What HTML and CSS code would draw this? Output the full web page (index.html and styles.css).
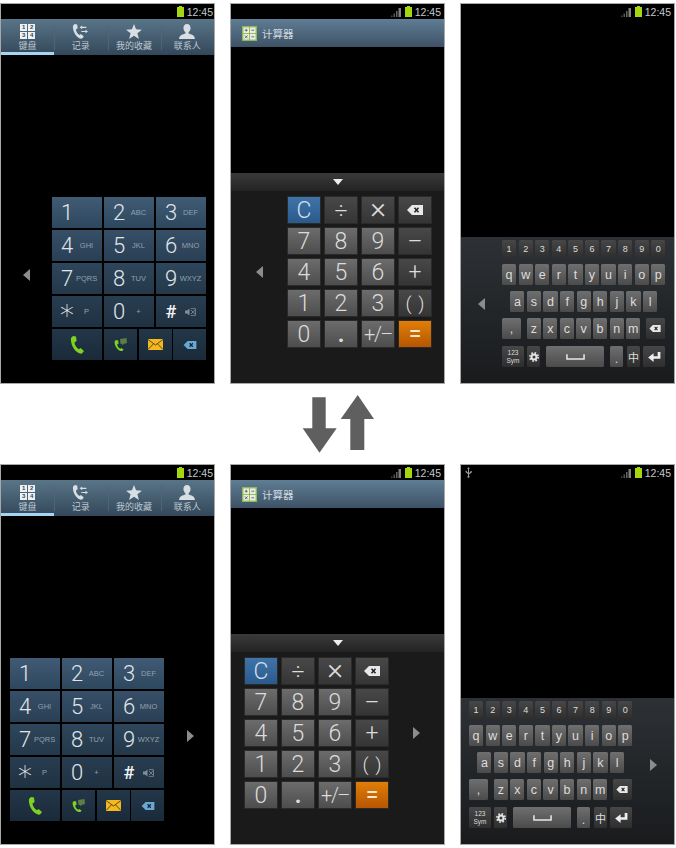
FILE: index.html
```html
<!DOCTYPE html>
<html>
<head>
  <meta charset="UTF-8">
  <title>单手操作</title>
  <link rel="stylesheet" href="styles.css">
</head>
<body>
  <svg class="sprite" xmlns="http://www.w3.org/2000/svg">
    <symbol id="handset" viewBox="0 0 14 18"><path d="M3 0 L6 .6 L6.6 5 L4.5 6.5 C4.6 9 6.500 12 9 13.200 L10.500 12 L14 15 L12 17.500 C7 18.800 0 10 1 2 Z"/></symbol>
    <symbol id="ipcall" viewBox="0 0 13 13"><path fill="#7ed321" d="M2 2 L4.200 2.400 L4.600 5.600 L3.200 6.600 C3.300 8.200 4.600 10 6.200 10.800 L7.200 10 L9.600 11.600 L8.400 13 C4.800 13.800 0 8 .7 3.200 Z"/><path fill="#5d7d45" d="M6 1 L12.500 0 L13 5 L9.500 6 L8.500 7.500 L8 5.800 L6.500 6 Z"/></symbol>
    <symbol id="mail" viewBox="0 0 15 11"><rect width="15" height="11" fill="#f5b91e"/><path d="M0 .5 L7.500 6 L15 .5 M0 10.500 L5.500 4.800 M15 10.500 L9.500 4.800" fill="none" stroke="#4a3c14" stroke-width=".9"/></symbol>
    <symbol id="mute" viewBox="0 0 11 8"><path d="M0 2.500 H2 L4.500 .5 V7.500 L2 5.500 H0 Z"/><path d="M6 2 L10 6 M10 2 L6 6 M5.800 .6 H10.500 V7.400 H5.800" fill="none" stroke="currentColor" stroke-width=".8"/></symbol>
    <symbol id="backspace" viewBox="0 0 16 10"><path d="M5 0 H16 V10 H5 L0 5 Z"/><path d="M7.500 2.800 L11.500 7.200 M11.500 2.800 L7.500 7.200" class="cut"/></symbol>
    <symbol id="battery" viewBox="0 0 7 11"><path d="M2 0 H5 V1 H7 V11 H0 V1 H2 Z"/></symbol>
    <symbol id="signal" viewBox="0 0 10 10"><path d="M0 8.500 H1.500 V10 H0 Z" fill="#444"/><path d="M2.500 6.500 H4 V10 H2.500 Z" fill="#555"/><path d="M5 4 H6.500 V10 H5 Z" fill="#666"/><path d="M7.500 1 H10 V10 H7.500 Z" fill="#808080"/></symbol>
    <symbol id="left" viewBox="0 0 7 12"><path d="M7 0 V12 L0 6 Z"/></symbol>
    <symbol id="right" viewBox="0 0 7 12"><path d="M0 0 V12 L7 6 Z"/></symbol>
    <symbol id="star" viewBox="0 0 20 19"><path d="M10 0 L12.600 6.600 L20 7.200 L14.300 11.800 L16.200 19 L10 15 L3.800 19 L5.700 11.800 L0 7.200 L7.400 6.600 Z"/></symbol>
    <symbol id="person" viewBox="0 0 20 19"><path d="M10 0 C13 0 14.500 2.300 14.500 5 C14.500 7.500 13.300 9.500 12 10.500 V12 C15 13 20 14 20 19 H0 C0 14 5 13 8 12 V10.500 C6.700 9.500 5.500 7.500 5.500 5 C5.500 2.300 7 0 10 0 Z"/></symbol>
    <symbol id="calls" viewBox="0 0 20 18"><path d="M3 0 L6 .6 L6.600 5 L4.500 6.500 C4.600 9 6.500 12 9 13.200 L10.500 12 L14 15 L12 17.500 C7 18.800 0 10 1 2 Z"/><path d="M9 4 L12 1.800 V3.300 H17 V4.700 H12 V6.200 Z M19 9 L16 6.800 V8.300 H11 V9.700 H16 V11.200 Z"/></symbol>
    <symbol id="gear" viewBox="0 0 12 12"><circle cx="6" cy="6" r="3" fill="none" stroke="currentColor" stroke-width="2.400"/><circle cx="6" cy="6" r="5" fill="none" stroke="currentColor" stroke-width="2" stroke-dasharray="2 1.930"/></symbol>
    <symbol id="space" viewBox="0 0 20 6"><path d="M1 0 V5 H19 V0" fill="none" stroke="currentColor" stroke-width="1.600"/></symbol>
    <symbol id="enter" viewBox="0 0 14 11"><path d="M10.500 0 H13.500 V7.500 H6 V11 L0 6 L6 1.500 V4.800 H10.500 Z"/></symbol>
    <symbol id="usb" viewBox="0 0 7 11"><path d="M3 2 H2.200 L3.500 0 L4.800 2 H4 V6 L5.500 4.800 V4 H6.800 V5.500 L4 7.600 V9 A1 1 0 1 1 3 9 V7 L.6 5.200 V3.800 H1.800 V4.700 L3 5.600 Z"/></symbol>
    <symbol id="calc" viewBox="0 0 16 16"><rect width="16" height="16" fill="#8fb858"/><rect x="1.500" y="1.500" width="6" height="6" fill="#e8efe0"/><rect x="8.500" y="1.500" width="6" height="6" fill="#e8efe0"/><rect x="1.500" y="8.500" width="6" height="6" fill="#e8efe0"/><rect x="8.500" y="8.500" width="6" height="6" fill="#e8efe0"/><path d="M3 4.500 H6 M4.500 3 V6 M10 4.500 H13 M3 10 L6 13 M6 10 L3 13 M10 11.500 H13" stroke="#556" stroke-width=".9"/></symbol>
  </svg>

  <div class="sheet">
    <!-- first row: panels pushed to the right -->
    <section class="phone">
      <div class="status">
        <svg class="ic-battery"><use href="#battery"/></svg><span class="time">12:45</span>
      </div>
      <nav class="tabs">
        <div class="tab active">
          <div class="tab-pad"><b>1</b><b>2</b><b>3</b><b>4</b></div>
          <span>键盘</span>
        </div>
        <div class="tab"><svg class="tab-ic ic-calls"><use href="#calls"/></svg><span>记录</span></div>
        <div class="tab"><svg class="tab-ic"><use href="#star"/></svg><span>我的收藏</span></div>
        <div class="tab"><svg class="tab-ic"><use href="#person"/></svg><span>联系人</span></div>
      </nav>
      <div class="dial dial-right">
        <div class="side"><svg class="arrow"><use href="#left"/></svg></div>
        <div class="keypad">
          <div class="dkey r1"><i>1</i></div>
          <div class="dkey r1"><i>2</i><em>ABC</em></div>
          <div class="dkey r1"><i>3</i><em>DEF</em></div>
          <div class="dkey r2"><i>4</i><em>GHI</em></div>
          <div class="dkey r2"><i>5</i><em>JKL</em></div>
          <div class="dkey r2"><i>6</i><em>MNO</em></div>
          <div class="dkey r3"><i>7</i><em>PQRS</em></div>
          <div class="dkey r3"><i>8</i><em>TUV</em></div>
          <div class="dkey r3"><i>9</i><em>WXYZ</em></div>
          <div class="dkey r4"><i class="aster">*</i><em>P</em></div>
          <div class="dkey r4"><i>0</i><em>+</em></div>
          <div class="dkey r4"><i class="hash">#</i><svg class="ic-mute"><use href="#mute"/></svg></div>
          <div class="actions">
            <div class="akey wide"><svg class="ic-call"><use href="#handset"/></svg></div>
            <div class="akey"><svg class="ic-ip"><use href="#ipcall"/></svg></div>
            <div class="akey"><svg class="ic-mail"><use href="#mail"/></svg></div>
            <div class="akey"><svg class="ic-del"><use href="#backspace"/></svg></div>
          </div>
        </div>
      </div>
    </section>

    <section class="phone">
      <div class="status tight">
        <svg class="ic-signal"><use href="#signal"/></svg><svg class="ic-battery"><use href="#battery"/></svg><span class="time">12:45</span>
      </div>
      <header class="title"><svg class="ic-calc"><use href="#calc"/></svg><span>计算器</span></header>
      <div class="calc">
        <div class="calc-bar"><div class="drop"></div></div>
        <div class="calc-body calc-right">
          <div class="side"><svg class="arrow"><use href="#left"/></svg></div>
          <div class="calc-keys">
            <div class="ckey clear">C</div><div class="ckey op">÷</div><div class="ckey op times">×</div><div class="ckey op"><svg class="ic-cdel"><use href="#backspace"/></svg></div>
            <div class="ckey">7</div><div class="ckey">8</div><div class="ckey">9</div><div class="ckey op">–</div>
            <div class="ckey">4</div><div class="ckey">5</div><div class="ckey">6</div><div class="ckey op">+</div>
            <div class="ckey">1</div><div class="ckey">2</div><div class="ckey">3</div><div class="ckey op paren">( )</div>
            <div class="ckey">0</div><div class="ckey point">.</div><div class="ckey small">+/–</div><div class="ckey equal">=</div>
          </div>
        </div>
      </div>
    </section>

    <section class="phone">
      <div class="status tight">
        <svg class="ic-signal"><use href="#signal"/></svg><svg class="ic-battery"><use href="#battery"/></svg><span class="time">12:45</span>
      </div>
      <div class="kb kb-right">
        <div class="side"><svg class="arrow"><use href="#left"/></svg></div>
        <div class="kb-keys">
          <div class="kb-row nums"><b>1</b><b>2</b><b>3</b><b>4</b><b>5</b><b>6</b><b>7</b><b>8</b><b>9</b><b>0</b></div>
          <div class="kb-row"><b>q</b><b>w</b><b>e</b><b>r</b><b>t</b><b>y</b><b>u</b><b>i</b><b>o</b><b>p</b></div>
          <div class="kb-row mid"><b>a</b><b>s</b><b>d</b><b>f</b><b>g</b><b>h</b><b>j</b><b>k</b><b>l</b></div>
          <div class="kb-row"><b class="comma">,</b><b>z</b><b>x</b><b>c</b><b>v</b><b>b</b><b>n</b><b>m</b><b class="kdel"><svg class="ic-kdel"><use href="#backspace"/></svg></b></div>
          <div class="kb-row last">
            <b class="sym">123<br>Sym</b><b class="narrow"><svg class="ic-gear"><use href="#gear"/></svg></b>
            <b class="spc"><svg class="ic-space"><use href="#space"/></svg></b>
            <b class="narrow dot">.</b><b class="narrow zh">中</b>
            <b class="ent"><svg class="ic-enter"><use href="#enter"/></svg></b>
          </div>
        </div>
      </div>
    </section>

    <div class="swap">
      <svg class="swap-ic" viewBox="0 0 78 60"><path d="M12.300 3.300 H25.700 V34.300 H36.700 L19.500 58.700 L2.700 34.300 H12.300 Z"/><path d="M57.700 1 L74 25 H64.300 V56 H50.300 V25 H40.700 Z"/></svg>
    </div>

    <!-- second row: panels pushed to the left -->
    <section class="phone">
      <div class="status">
        <svg class="ic-battery"><use href="#battery"/></svg><span class="time">12:45</span>
      </div>
      <nav class="tabs">
        <div class="tab active">
          <div class="tab-pad"><b>1</b><b>2</b><b>3</b><b>4</b></div>
          <span>键盘</span>
        </div>
        <div class="tab"><svg class="tab-ic ic-calls"><use href="#calls"/></svg><span>记录</span></div>
        <div class="tab"><svg class="tab-ic"><use href="#star"/></svg><span>我的收藏</span></div>
        <div class="tab"><svg class="tab-ic"><use href="#person"/></svg><span>联系人</span></div>
      </nav>
      <div class="dial dial-left">
        <div class="keypad">
          <div class="dkey r1"><i>1</i></div>
          <div class="dkey r1"><i>2</i><em>ABC</em></div>
          <div class="dkey r1"><i>3</i><em>DEF</em></div>
          <div class="dkey r2"><i>4</i><em>GHI</em></div>
          <div class="dkey r2"><i>5</i><em>JKL</em></div>
          <div class="dkey r2"><i>6</i><em>MNO</em></div>
          <div class="dkey r3"><i>7</i><em>PQRS</em></div>
          <div class="dkey r3"><i>8</i><em>TUV</em></div>
          <div class="dkey r3"><i>9</i><em>WXYZ</em></div>
          <div class="dkey r4"><i class="aster">*</i><em>P</em></div>
          <div class="dkey r4"><i>0</i><em>+</em></div>
          <div class="dkey r4"><i class="hash">#</i><svg class="ic-mute"><use href="#mute"/></svg></div>
          <div class="actions">
            <div class="akey wide"><svg class="ic-call"><use href="#handset"/></svg></div>
            <div class="akey"><svg class="ic-ip"><use href="#ipcall"/></svg></div>
            <div class="akey"><svg class="ic-mail"><use href="#mail"/></svg></div>
            <div class="akey"><svg class="ic-del"><use href="#backspace"/></svg></div>
          </div>
        </div>
        <div class="side"><svg class="arrow"><use href="#right"/></svg></div>
      </div>
    </section>

    <section class="phone">
      <div class="status tight">
        <svg class="ic-signal"><use href="#signal"/></svg><svg class="ic-battery"><use href="#battery"/></svg><span class="time">12:45</span>
      </div>
      <header class="title"><svg class="ic-calc"><use href="#calc"/></svg><span>计算器</span></header>
      <div class="calc">
        <div class="calc-bar"><div class="drop"></div></div>
        <div class="calc-body calc-left">
          <div class="calc-keys">
            <div class="ckey clear">C</div><div class="ckey op">÷</div><div class="ckey op times">×</div><div class="ckey op"><svg class="ic-cdel"><use href="#backspace"/></svg></div>
            <div class="ckey">7</div><div class="ckey">8</div><div class="ckey">9</div><div class="ckey op">–</div>
            <div class="ckey">4</div><div class="ckey">5</div><div class="ckey">6</div><div class="ckey op">+</div>
            <div class="ckey">1</div><div class="ckey">2</div><div class="ckey">3</div><div class="ckey op paren">( )</div>
            <div class="ckey">0</div><div class="ckey point">.</div><div class="ckey small">+/–</div><div class="ckey equal">=</div>
          </div>
          <div class="side"><svg class="arrow"><use href="#right"/></svg></div>
        </div>
      </div>
    </section>

    <section class="phone">
      <div class="status tight">
        <svg class="ic-usb"><use href="#usb"/></svg><svg class="ic-signal"><use href="#signal"/></svg><svg class="ic-battery"><use href="#battery"/></svg><span class="time">12:45</span>
      </div>
      <div class="kb kb-left">
        <div class="kb-keys">
          <div class="kb-row nums"><b>1</b><b>2</b><b>3</b><b>4</b><b>5</b><b>6</b><b>7</b><b>8</b><b>9</b><b>0</b></div>
          <div class="kb-row"><b>q</b><b>w</b><b>e</b><b>r</b><b>t</b><b>y</b><b>u</b><b>i</b><b>o</b><b>p</b></div>
          <div class="kb-row mid"><b>a</b><b>s</b><b>d</b><b>f</b><b>g</b><b>h</b><b>j</b><b>k</b><b>l</b></div>
          <div class="kb-row"><b class="comma">,</b><b>z</b><b>x</b><b>c</b><b>v</b><b>b</b><b>n</b><b>m</b><b class="kdel"><svg class="ic-kdel"><use href="#backspace"/></svg></b></div>
          <div class="kb-row last">
            <b class="sym">123<br>Sym</b><b class="narrow"><svg class="ic-gear"><use href="#gear"/></svg></b>
            <b class="spc"><svg class="ic-space"><use href="#space"/></svg></b>
            <b class="narrow dot">.</b><b class="narrow zh">中</b>
            <b class="ent"><svg class="ic-enter"><use href="#enter"/></svg></b>
          </div>
        </div>
        <div class="side"><svg class="arrow"><use href="#right"/></svg></div>
      </div>
    </section>
  </div>
</body>
</html>
```

FILE: styles.css
```css
body {
  margin: 0;
  background: #ffffff;
  font-family: "Liberation Sans", "Noto Sans CJK SC", sans-serif;
}
.sprite {
  display: none;
}
.sheet {
  display: grid;
  grid-template-columns: repeat(3, 215px);
  grid-template-rows: 381px 80px 381px;
  column-gap: 15px;
  padding-top: 3px;
}
.swap {
  grid-column: 1 / 4;
  display: flex;
  justify-content: center;
  align-items: center;
}
.swap-ic {
  width: 78px;
  height: 60px;
  fill: #5f5f5f;
  margin-left: 3px;
}

/* phone frame */
.phone {
  display: flex;
  flex-direction: column;
  box-sizing: border-box;
  border: 1px solid #a8a8a8;
  background: #000000;
  overflow: hidden;
}
.status {
  height: 15px;
  flex: none;
  display: flex;
  justify-content: flex-end;
  align-items: center;
  gap: 2px;
  padding-right: 1px;
}
.status.tight {
  padding-right: 3px;
}
.time {
  font-size: 10.500px;
  color: #c4c8cc;
  margin-left: 1px;
}
.ic-battery {
  width: 7px;
  height: 11px;
  fill: #a5d70f;
}
.ic-signal {
  width: 10px;
  height: 10px;
  margin-right: 2px;
}
.ic-usb {
  width: 7px;
  height: 11px;
  fill: #9a9a9a;
  margin-right: auto;
  margin-left: 4px;
}
.side {
  flex: 1;
  display: flex;
  justify-content: center;
}
.arrow {
  width: 7px;
  height: 12px;
  fill: #8c8c8c;
}

/* phone app */
.tabs {
  height: 36px;
  flex: none;
  display: flex;
  background: linear-gradient(#5a7588, #33475a);
}
.tab {
  flex: 1;
  box-sizing: border-box;
  display: flex;
  flex-direction: column;
  align-items: center;
  padding-top: 5px;
  font-size: 9px;
  color: #bcc7d0;
}
.tab + .tab {
  background: linear-gradient(#4f6577, #4f6577) left 6px / 1px 25px no-repeat;
}
.tab span {
  line-height: 11px;
  margin-top: 2px;
}
.tab.active {
  border-bottom: 3px solid #a6d4f2;
}
.tab-ic {
  width: 16px;
  height: 15px;
  fill: #d8dfe4;
}
.ic-calls {
  width: 17px;
}
.tab-pad {
  width: 15px;
  height: 15px;
  display: grid;
  grid-template-columns: 7px 7px;
  grid-template-rows: 7px 7px;
  gap: 1px;
}
.tab-pad b {
  background: #eef1f3;
  color: #33475a;
  font-size: 6px;
  line-height: 7px;
  text-align: center;
}
.dial {
  margin-top: auto;
  display: flex;
  align-items: center;
  padding-bottom: 23px;
}
.dial-right {
  padding-right: 8px;
}
.dial-left {
  padding-left: 9px;
}
.dial-left .side {
  padding-left: 3px;
}
.dial .arrow {
  margin-bottom: 8px;
}
.keypad {
  width: 154px;
  display: grid;
  grid-template-columns: repeat(3, 50px);
  grid-auto-rows: 31px;
  gap: 2px;
}
.dkey {
  display: grid;
  grid-template-columns: 30px 9px;
  align-items: center;
  justify-items: center;
}
.dkey i {
  font-family: Roboto, sans-serif;
  font-weight: 300;
  font-style: normal;
  font-size: 22px;
  color: #e0e5e9;
}
.dkey em {
  font-style: normal;
  font-size: 7.500px;
  color: #93a0ac;
  white-space: nowrap;
}
.dkey i.aster {
  font-family: "DejaVu Sans", sans-serif;
  font-size: 28px;
  line-height: 20px;
  padding-top: 10px;
  height: 21px;
  color: #f2f4f6;
}
.dkey i.hash {
  font-size: 18px;
  font-weight: 500;
  color: #f2f4f6;
}
.ic-mute {
  width: 11px;
  height: 8px;
  justify-self: center;
  margin-left: -1px;
  fill: #7f8e9b;
  color: #7f8e9b;
}
.r1 {
  background: linear-gradient(#405b74, #2d475e);
}
.r2 {
  background: linear-gradient(#375067, #293f55);
}
.r3 {
  background: linear-gradient(#2e465b, #24384a);
}
.r4 {
  background: linear-gradient(#283d50, #1f3242);
}
.actions {
  grid-column: 1 / 4;
  display: flex;
  gap: 1.500px;
}
.akey {
  flex: 1;
  display: flex;
  justify-content: center;
  align-items: center;
  background: linear-gradient(#233749, #1a2a39);
}
.akey.wide {
  flex: none;
  width: 50px;
  margin-right: .5px;
}
.ic-call {
  width: 14px;
  height: 18px;
  fill: #7ed321;
}
.ic-ip {
  width: 13px;
  height: 13px;
}
.ic-mail {
  width: 15px;
  height: 11px;
}
.ic-del {
  width: 14px;
  height: 8px;
  fill: #6aa8d4;
}
.cut {
  fill: none;
  stroke: #16232f;
  stroke-width: 1.500;
}

/* calculator */
.title {
  height: 28px;
  flex: none;
  display: flex;
  align-items: center;
  gap: 5px;
  padding-left: 11px;
  font-size: 10.500px;
  color: #d4dbe0;
  background: linear-gradient(#5f7d94, #3e5266);
}
.ic-calc {
  width: 15px;
  height: 15px;
}
.calc {
  margin-top: auto;
  height: 210px;
  background: #1a1a1a;
}
.calc-bar {
  height: 18px;
  display: flex;
  justify-content: center;
  align-items: center;
  background: linear-gradient(#3a3a3a, #232323);
}
.drop {
  width: 0;
  height: 0;
  border-left: 5.500px solid transparent;
  border-right: 5.500px solid transparent;
  border-top: 6px solid #eeeeee;
}
.calc-body {
  display: flex;
  align-items: center;
  padding: 5px 0 35px;
}
.calc-right {
  padding-right: 12px;
}
.calc-left {
  padding-left: 13px;
}
.calc-keys {
  display: grid;
  grid-template-columns: repeat(4, 34px);
  grid-auto-rows: 28px;
  gap: 3px;
}
.ckey {
  display: flex;
  justify-content: center;
  align-items: center;
  box-sizing: border-box;
  border: 1px solid #2a2a2a;
  font-family: Roboto, sans-serif;
  font-weight: 300;
  font-size: 23px;
  color: #dcdcdc;
  background: linear-gradient(#6c6c6c, #4d4d4d);
}
.ckey.op {
  background: linear-gradient(#484848, #353535);
}
.ckey.times {
  font-size: 30px;
  padding-bottom: 5px;
}
.ckey.paren {
  font-size: 19px;
  word-spacing: 2px;
}
.ckey.point {
  font-weight: 700;
}
.ckey.clear {
  color: #d2dfe9;
  background: linear-gradient(#3f74a8, #2a5a8c);
}
.ckey.equal {
  color: #f5e6d0;
  font-weight: 400;
  background: linear-gradient(#e07e08, #b65600);
}
.ckey.small {
  font-size: 20px;
  letter-spacing: -1.500px;
}
.ic-cdel {
  width: 16px;
  height: 10px;
  fill: #e8e8e8;
}
.ic-cdel .cut {
  stroke: #333333;
}

/* keyboard */
.kb {
  margin-top: auto;
  height: 146px;
  box-sizing: border-box;
  display: flex;
  align-items: center;
  padding: 3px 0 16px;
  background: linear-gradient(#2d3135, #191b1d);
}
.kb-right {
  padding-right: 9px;
}
.kb-left {
  padding-left: 8px;
}
.kb-keys {
  width: 163px;
  display: flex;
  flex-direction: column;
  gap: 6px;
}
.kb-row {
  display: flex;
  gap: 2.400px;
  height: 21px;
}
.kb-row.nums {
  height: 18px;
}
.kb-row.mid {
  padding-left: 8.300px;
}
.kb-row.last {
  gap: 3px;
  margin-top: 1px;
}
.kb-row b {
  flex: 0 0 14.200px;
  display: flex;
  justify-content: center;
  align-items: center;
  border-radius: 1.500px;
  font-size: 12.500px;
  font-weight: 400;
  color: #dddddd;
  background: linear-gradient(#6f6f6f, #4b4b4b);
}
.nums b {
  font-size: 9px;
  background: linear-gradient(#474747, #2e2e2e);
}
.kb-row b.comma {
  flex-basis: 19px;
  margin-right: 3.300px;
}
.kb-row b.kdel {
  flex-basis: 19px;
  margin-left: 3px;
  background: linear-gradient(#474747, #2e2e2e);
}
.ic-kdel {
  width: 12px;
  height: 7px;
  fill: #e8e8e8;
}
.ic-kdel .cut {
  stroke: #333333;
}
.kb-row b.sym {
  flex-basis: 22px;
  display: block;
  text-align: center;
  font-size: 6.500px;
  line-height: 8px;
  padding-top: 3px;
  background: linear-gradient(#474747, #2e2e2e);
}
.kb-row b.narrow {
  flex-basis: 13px;
  background: linear-gradient(#474747, #2e2e2e);
}
.kb-row b.dot {
  margin-left: 3px;
  background: linear-gradient(#6f6f6f, #4b4b4b);
  align-items: flex-end;
  line-height: 15px;
}
.kb-row b.zh {
  margin-left: 1px;
  font-size: 11px;
}
.kb-row b.spc {
  flex-basis: 58px;
  margin-left: 3px;
}
.kb-row b.ent {
  flex-basis: 22px;
  background: linear-gradient(#474747, #2e2e2e);
}
.ic-gear {
  width: 10px;
  height: 10px;
  color: #e4e4e4;
}
.ic-space {
  width: 19px;
  height: 6px;
  color: #e8e8e8;
}
.ic-enter {
  width: 13px;
  height: 10px;
  fill: #eeeeee;
}
```
